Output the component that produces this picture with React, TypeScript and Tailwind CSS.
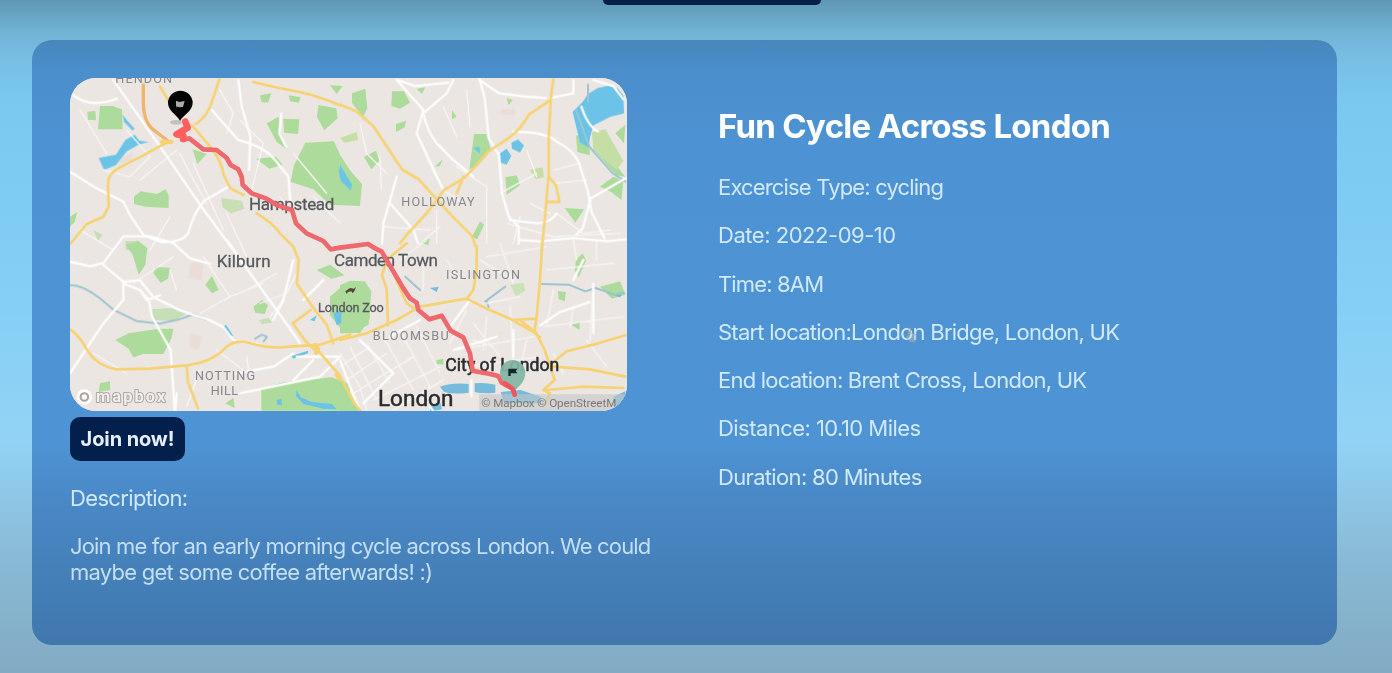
import React from "react";

function RouteMap() {
  return (
    <svg viewBox="30 24 1671 999" preserveAspectRatio="none" className="block h-[333px] w-[557px] rounded-[26px] bg-[#ebe6e1]" fill="none" strokeLinecap="round" strokeLinejoin="round" fontFamily="Roboto, 'Liberation Sans', sans-serif">
      <rect x="30" y="24" width="1671" height="999" fill="#ebe6e2" />
      {/* parks */}
      <g fill="#addb9b">
        <path d="M120 108h38l28 10 2 60-74 0z M82 125l24-2 2 28-24-2z M398 238l42 14-28 30z M222 380l20-16 50 8 24-14 10 18 0 38-70-4-34-8z M620 160l36-20 6 50 16 46-28-20z M670 146l48 2-4 44-42-4z M775 105l54 10 4 30-40 36-22-40z M736 218l86-4 18 40 32 50 34 38-6 66-90-4-50-46-68-22 10-50z M588 266l60-6 20 24-40 12z M600 76l34-6-10 28-20-2z M30 440l22-14-8 30-14 14z M810 46l38 2-18 24z M686 76l36 6-6 16-26-4z" />
        <path d="M484 384l60 8 10 24-40 14-26-18z M196 514l40-2 20 28-58 0z M100 480l28 14-14 20z" fill="#c8deb4" />
        <g transform="translate(840 0)">
          <path d="M36 70l40-14 6 60-14 26-32-44z M156 64l36 0 18 34-30 18-26-8z M168 162l30-10-4 20-26 14z M72 260l36-18 10 30-24 26z M402 192l38 0 12 46-40 50-24 10z M496 322l34-6 10 30-40 28z M674 414l58 4-26 40z M708 196l38 6 4 54-38-10z M800 250l56 70 0 0-28-4-60-70z M780 350l40-30 30 14-6 56-30-24z M396 500l24-46 12 10-20 44z M336 120l14 20-14 8z M500 84l18 6-12 16z M826 190l30-26-4 56z M230 56l26-4-10 20z M284 290l24-22-8 20z M240 516l30-10-6 20z" />
          <path d="M0 204l50-18 4 24-40 8z M570 300l38-8 4 30-24 6z M756 186l40-8 54 94-20 28-70-60z" fill="#c5dea6" />
        </g>
        <g transform="translate(0 510)">
          <path d="M196 14l40-10 26 20-6 50-20 30-18-60z M286 80l44 4-6 32-22 12-22-28z M436 134l20-26 20 42-20 10z M166 300l40-20 90-14 44 0-6 30-24 46-60 0-30 10-14-26z M580 200l26-20 18 16-10 26-28-4z M604 448l60-20 150-16 56 20 0 80-266 0z M770 90l40-16 44 32-40 10z M810 170l30-26 80 0 10 90-30 46-50-4-40-50z M120 430l30-6 0 26-34 6z M496 490l24-16 4 30z" />
          <path d="M272 208l60-4 50 14-40 26-60-4z M596 240l30-6 10 14-30 4z" fill="#c8deb8" />
        </g>
        <g transform="translate(840 510)">
          <path d="M0 136l30-14 44 2 20 30-8 100-50 26-36 0z M708 60l20-20 10 22-22 50-12-20z M780 140l60-16 16 40-40 12z M654 154l24 2-4 28-18-6z M0 430l20 10 40 74-60 0z M694 254l26-8-2 24z M290 360l20-4 0 18-20-2z" />
          <path d="M510 134l40-6 6 24-28 16z" fill="#c9e3b7" />
        </g>
      </g>
      {/* built-up zones */}
      <g fill="#ead8d0" opacity=".6">
        <path d="M482 118h44v16h-44z" transform="translate(840 0)" />
        <path d="M160 272l60-24-4 20-50 20z M390 580l40-8-4 60-40-8z M390 790l36 10-10 40-30-10z" />
      </g>
      {/* water */}
      <g fill="#6bc4e8">
        <path d="M116 264l52-10 28-44 28-16 14 18 28 4-30 8-36 20-34 42-34 14z" />
        <path d="M188 134l14 18 22 24-6 6-26-26z M834 290l18 32 24 20-4 20-30-30z" />
        <g transform="translate(840 0)">
          <path d="M744 72l30-18 34-8 26 10 16 20 2 54-40 10-52 26-10 36 -4 30-26-14-22-92 30-30z M480 250l20-14 14 22-14 26-18-6z M514 218l20-10 18 18-12 22-24-12z M0 284l30 50 6 14-36-30z M400 234l18-4 2 20z" />
        </g>
        <path d="M710 960l12 22 34 14 60 6 14 16-40-2-60-14-22-24z M650 990l14-4 2 20-14-2z M694 858l50-16 0 8-44 16z M820 730l24-10 0 40-14 6z M490 770l8-6 22 34-16-4z M750 750l20-14-6 18z" />
        <g transform="translate(840 510)" fill="#76bbdc">
          <path d="M300 440q40-14 86-8v26q-46 6-74-2z M404 430q30-4 62 4v24q-40 4-62-2z M482 456l60-6 60 20v20h-110z M270 498l30-12 6 22-36 6z M270 144l26-4-6 16z M796 158l50 6-6 8z M820 470l36-16 0 40-36 4z" />
        </g>
      </g>
      <g stroke="#9dc4d0" strokeWidth="6">
        <path d="M30 645q40 0 90 40l40 34 70 34 70 8 60-14 40-14 40 16M585 806l20-12 16 6-10 14" />
        <path transform="translate(840 510)" d="M606 132l80 2 50 20 30-10 60 20 26-6M196 110l44 40M436 184l60-44M440 182l6 20" />
        <path transform="translate(840 0)" d="M708 120l40 110 70 80 38 24M744 44l0 50" />
      </g>
      {/* minor streets */}
      <g stroke="#f7f5f4" strokeWidth="4">
        <path d="M60 120l80 130M200 180l70 80-60 60-80-20M360 250l30 60 50 90M400 280l90 200M240 330l110-90M540 150l70 70-40 160M480 60l40 70-20 60M660 380l40 50M760 380l80 80M700 250l100 120M60 480l100 60M330 440l-60 100M500 430l60 130M100 850l100 60M420 900l-40 110M470 840l80 60M560 860l10 60M610 640l-100 40M560 660l90-50M600 700l80-30 30-60M630 740l40-50M220 640l120-80M330 600l20 60M430 560l80 120-90 50" />
        <g transform="translate(840 0)">
          <path d="M60 160l20 90 60 60M120 260l4 100M240 210l70 150 60 40M130 470l140 10M290 420v100M300 470l-60 50M350 290l90 60v170M310 110l40 90M380 60l10 110M480 370l110-60M560 240l30 80M500 460l140 40 200-10M520 520l20-80M650 430l80 60 80-10M570 400l60 30M640 300l80-20M640 340l100-10" />
        </g>
        <g transform="translate(840 510)">
          <path d="M0 340l60 100 20 70M30 320l80 160M80 310l70 120M130 290l90 160M180 270l90 170M230 260l70 140M20 420l120-80M40 460l180-110M100 480l200-100M160 510l150-90M0 380l90-60M380 210l-50 100M400 250l80 100M440 230l-10 100M350 330l230-40M380 380l220-30M510 200l10 160M560 300l-30 130M610 260l240-30M640 150l-20 110M760 140l-10 160M700 200l-10 60M640 340l30 60M740 300l60 80M420 60l100 60M320 60l40 60M250 60v90M480 10l40 120M440 50l180-30M620 90l200-20M700 0l10 60M770 0v60M180 60l80-60M440 190l100-20M400 300l60 20" />
        </g>
      </g>
      {/* roads */}
      <g stroke="#fdfdfd" strokeWidth="7">
        <path d="M160 30l80 114 70 100 110 160 110 150 130 180 60 86M40 76q50 40 130 10M30 305l80 50 80 40 20 40 40 60 50 20q60 6 84-24 20-70 50-100l70-40M455 120l80 90q80 20 110 60l40 50 6 80M535 30l10 80 26 90-4 100M664 130l-6 60 20 40" />
        <path d="M30 575l60 14 40-10 60-80 80 0 70 20 50 46 60 16M130 585l60 50 50-4 40 50 80 40 90 30 40 20 30 40 80 14M190 640l50 20 26 30 10 50 56 100 12 180M190 640l0 50-60 70-60 90-40 60M240 660l20 30 40-14M500 510l60 80M700 570l-30 120-30 60M730 690l60-60M350 970l-4 50M540 970l240-50 60-60-130 0M700 930l60-60M700 850l-60 40-110 20" />
        <g transform="translate(840 0)">
          <path d="M170 30l80 90-20 70 60 130 20 40M340 30l-20 40-70 60q10 50 40 90l50 50 60 50M175 30l50 18 100-10M418 24l16 60 12 120 30 50M418 30l60 40 80 10 60 4M700 30v40l-70 14M476 250l10 120 20 70 30 30 0 50M520 185q100 0 130 30 60 30 72 80l22 70 10 60 40 80M752 385l104-60M752 385l-24 90-20 20M760 30l60 18 30 40M724 110q20 60 50 74M170 320l-40 140-4 60M150 400l70 80 14 40M650 430q-20 30-60 30l-80-10" />
        </g>
        <g transform="translate(840 510)">
          <path d="M0 360l30 80 30 70M60 300l100 100-90 90M240 240l-90 50M390 180l-60 80M520 270v80M470 290l-130 40M540 0l60 4 100-10 100 10 56-6M600 256l60-40 90-30M760 130l0 150M700 120l30-60M394 420v48M270 500l10 14" />
        </g>
      </g>
      {/* main roads */}
      <g stroke="#f6d273" strokeWidth="8">
        <path d="M30 522l50-60 50-22 16-30-2-70q0-30 40-50l70-36 50-28 26-12M300 50l30 50M478 28q-10 30-20 60-14 50-50 74M395 165l60 70q30 40 36 80l20 40 40 20M590 430q50 30 70 60l40 40 16 40-6 70 20 30 30 44 40 50 20 56M752 720l-54 40 36 50 34 34M30 778q30 20 50 60 30 50 90 60l100-2 110-10q80-10 120-56 30-24 70-10 60 18 120 10l90-6 90-30M380 886l4 50 30 80M768 835l70 80 44 84 20 24M580 36q80 20 140 30 60 14 120 40" />
        <g transform="translate(840 0)">
          <path d="M0 104l50 20 50 44 46 70 40 60 50 30 40 44 60 66 60 60 10 30M640 26l-8 64-6 120 0 100-10 120-10 100M632 90l-66 44q-20 40-60 70l-60 40-50 56-24 24-60 36-52 70-60 64-20 26M370 320l-20 50M626 320l22 26 10 50-38 0" />
        </g>
        <g transform="translate(840 510)">
          <path d="M606 20l-6 100-10 110-6 40 30 60 10 30 20 60-34 30 20 10-14 30M410 20l0 70-10 60-20 28M0 300l80-20 90-40 70-40 140-24 60 30 70 30 70 40 20 16M520 240l66-4M540 240l50 40M200 10l-60 50-14 46 14 40 4 110M630 374l50-40 80-20 96-28M640 380l110 8 106 22M620 450l110-10 120 4M160 100l40 90 30 20" />
        </g>
        <path d="M250 45l0 50q0 60 30 84l44 34" stroke="#efb46e" strokeWidth="10" />
        <path d="M306 216l28 0M764 826l10 10-6 12M830 915l8 10" strokeWidth="13" />
      </g>
      {/* place labels */}
      <g fill="#55575b" stroke="#55575b" strokeWidth=".8" fontSize="51">
        <text x="567" y="421" textLength="256">Hampstead</text>
        <text x="470" y="591" textLength="162">Kilburn</text>
        <text x="822" y="589" textLength="312">Camden Town</text>
        <text x="774" y="725" fontSize="38" textLength="197">London Zoo</text>
      </g>
      <g fill="#85868d" fontSize="38">
        <text x="166" y="40" textLength="170">HENDON</text>
        <text x="1024" y="408" textLength="220">HOLLOWAY</text>
        <text x="1158" y="627" textLength="222">ISLINGTON</text>
        <text x="938" y="809" textLength="228">BLOOMSBU</text>
        <text x="405" y="931" textLength="180">NOTTING</text>
        <text x="452" y="974" textLength="82">HILL</text>
      </g>
      <g fill="#292b2e" stroke="#292b2e" strokeWidth="1.5">
        <text x="1156" y="903" fontSize="53" textLength="342" lengthAdjust="spacingAndGlyphs">City of London</text>
        <text x="954" y="1007" fontSize="67" textLength="226" lengthAdjust="spacingAndGlyphs">London</text>
      </g>
      <path d="M856 664l14-10 12 2 6-6-4 12-6 8-4-6-10 2-4 6z" fill="#584538" />
      {/* attribution */}
      <path d="M1258 973h443v50h-443z" fill="#c4c6c6" opacity=".6" />
      <text x="1264" y="1010" fontSize="35" textLength="405" fill="#77787a">© Mapbox © OpenStreetM</text>
      {/* route */}
      <path d="M376 153L384 173 347 194 370 197 368 210 388 205 430 238 470 240 500 264 512 285 535 298 545 320 548 345 575 370 620 386 650 405 696 420 708 460 740 490 790 513 812 538 840 533 924 522 940 532 965 545 1000 604 1030 655 1050 685 1070 698 1075 720 1108 748 1145 737 1172 782 1210 802 1230 850 1238 902 1290 912 1315 918 1325 938 1358 956 1364 974" stroke="#ee686d" strokeWidth="14" />
      <path d="M376 155L383 173 350 193 370 197 370 207" stroke="#ff5f5e" strokeWidth="20" />
      {/* pins */}
      <ellipse cx="348" cy="157" rx="18" ry="7" fill="#777" opacity=".35" />
      <path d="M324 99a37 37 0 0 1 74 0c0 24-28 36-38 54-8-18-36-30-36-54z" fill="#020303" />
      <path d="M348 114V92l10 4 16-3-5 18-12 1-7-3z" fill="#aaabaa" />
      <path d="M1320 908a38 38 0 0 1 76 0c0 25-17 38-31 54-20-16-45-29-45-54z" fill="#83b5a5" opacity=".93" />
      <path d="M1345 918V896h27l-5 7 5 7h-20v8z" fill="#112827" />
      <path d="M1335 940l23 16 6 18" stroke="#f0555c" strokeWidth="13" />
      <circle cx="73" cy="981" r="19" fill="#aaa5a0" stroke="#fff" strokeWidth="9" />
      <circle cx="73" cy="981" r="8" fill="#fff" />
      <text x="108" y="995" fontSize="49" fontWeight="700" textLength="208" fill="#f2efed" stroke="#aaa6a2" strokeWidth="6" paintOrder="stroke">mapbox</text>
    </svg>
  );
}

function HandCursor() {
  return (
    <svg viewBox="0 0 14 18" className="absolute top-[7px] left-[186px] h-[18px] w-[14px]" fill="#c9ccc4" fillOpacity=".35" stroke="#8f968f" strokeOpacity=".6" strokeWidth="1" strokeLinejoin="round">
      <path d="M4 10V2.500q1.200-1.500 2.400 0V7l5 1.200q1 .5.8 2L11.500 16H6L2 11q0-2 2-1z" />
    </svg>
  );
}

const details = [
  { text: "Excercise Type: cycling", tracking: "tracking-[-0.84px]" },
  { text: "Date: 2022-09-10", tracking: "tracking-[-0.47px]" },
  { text: "Time: 8AM", tracking: "tracking-[-0.85px]" },
  { text: "Start location:London Bridge, London, UK", tracking: "tracking-[-0.76px]", cursor: true },
  { text: "End location: Brent Cross, London, UK", tracking: "tracking-[-0.78px]" },
  { text: "Distance: 10.10 Miles", tracking: "tracking-[-0.55px]" },
  { text: "Duration: 80 Minutes", tracking: "tracking-[-0.67px]" },
];

export default function App() {
  return (
    <div className="flex h-[673px] w-[1392px] flex-col overflow-hidden bg-[linear-gradient(180deg,#5f97b3_0px,#6fb2d2_30px,#77bde3_55px,#7ac8f0_100px,#82cef5_280px,#92d3f5_440px,#88bad5_560px,#83aac3_673px)] font-['Inter','Liberation_Sans',sans-serif] text-[#d0e9fc]">
      <div className="ml-[603px] h-[5px] w-[218px] shrink-0 rounded-b-lg bg-[#02204a]" />
      <main className="mt-[35px] ml-[32px] flex h-[605px] w-[1305px] shrink-0 rounded-[20px] bg-[linear-gradient(180deg,#4688bc_0px,#4a8ecb_30px,#4d92d2_100px,#4e94d4_400px,#4a88c6_460px,#4580b9_530px,#4078ae_605px)] pt-[38px] pl-[38px]">
        <section className="flex w-[648px] shrink-0 flex-col items-start">
          <RouteMap />
          <button className="mt-[6px] h-[44px] w-[115px] rounded-[10px] bg-[#02204b] text-[20px] font-bold tracking-[-0.1px] text-[#e6eefa]">Join now!</button>
          <p className="mt-[24px] text-[22px] leading-[26px] tracking-[-0.65px]">Description:</p>
          <p className="mt-[22px] text-[22px] leading-[26px] whitespace-nowrap text-[#c3def2]">
            <span className="block tracking-[-0.85px]">Join me for an early morning cycle across London. We could</span>
            <span className="block tracking-[-0.76px]">maybe get some coffee afterwards! :)</span>
          </p>
        </section>
        <section className="pt-[27px]">
          <h1 className="text-[33px] leading-[42px] font-bold tracking-[-0.73px] whitespace-nowrap text-white">Fun Cycle Across London</h1>
          <div className="mt-[27px] flex flex-col gap-[22.3px]">
            {details.map((d) => (
              <p key={d.text} className={`relative text-[22px] leading-[26px] whitespace-nowrap ${d.tracking}`}>
                {d.text}
                {d.cursor && <HandCursor />}
              </p>
            ))}
          </div>
        </section>
      </main>
    </div>
  );
}
